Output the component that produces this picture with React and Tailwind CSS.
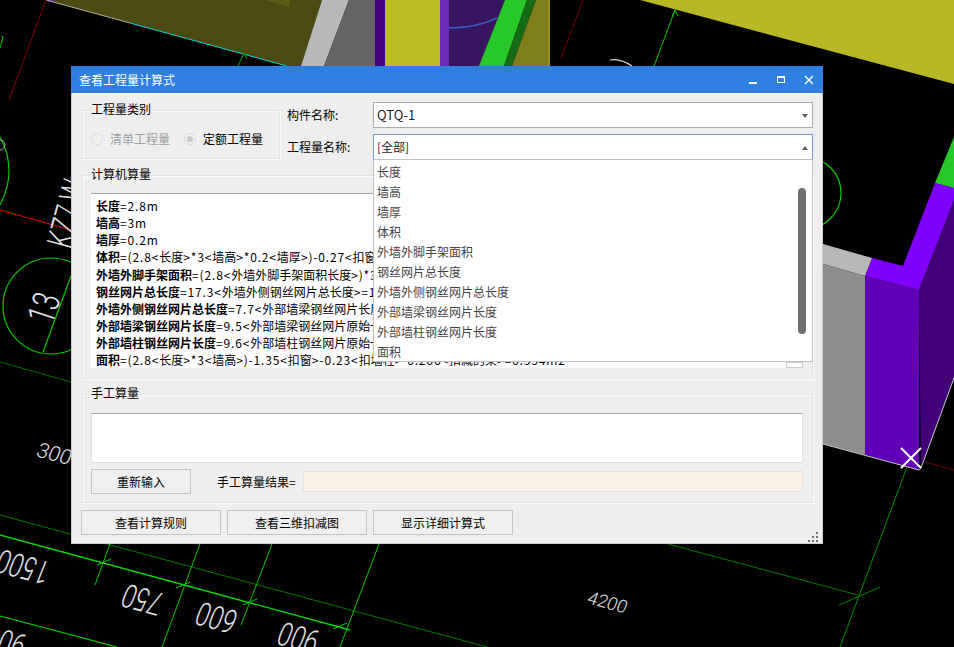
import React from "react";

const FONT = "font-['Noto_Sans_CJK_SC','Microsoft_YaHei','Liberation_Sans',sans-serif]";

const listItems = [
  "长度",
  "墙高",
  "墙厚",
  "体积",
  "外墙外脚手架面积",
  "钢丝网片总长度",
  "外墙外侧钢丝网片总长度",
  "外部墙梁钢丝网片长度",
  "外部墙柱钢丝网片长度",
  "面积",
];

const calcRows = [
  ["长度", "=2.8m"],
  ["墙高", "=3m"],
  ["墙厚", "=0.2m"],
  ["体积", "=(2.8<长度>*3<墙高>*0.2<墙厚>)-0.27<扣窗>-0.05<扣墙柱>=0.8m3"],
  ["外墙外脚手架面积", "=(2.8<外墙外脚手架面积长度>)*3<外墙外脚手架面积高度>=8.4m2"],
  ["钢丝网片总长度", "=17.3<外墙外侧钢丝网片总长度>=17.3m"],
  ["外墙外侧钢丝网片总长度", "=7.7<外部墙梁钢丝网片长度>+9.6<外部墙柱钢丝网片长度>=17.3m"],
  ["外部墙梁钢丝网片长度", "=9.5<外部墙梁钢丝网片原始长度>-1.8<扣窗>=7.7m"],
  ["外部墙柱钢丝网片长度", "=9.6<外部墙柱钢丝网片原始长度>=9.6m"],
  ["面积", "=(2.8<长度>*3<墙高>)-1.35<扣窗>-0.23<扣墙柱>-0.266<扣减的梁>=6.554m2"],
];

// cad dimension labels, skewed the way the 3d view projects them
const flipped = (e, f) => `matrix(-0.966 -0.26 0.51 -1.29 ${e} ${f})`;
const CAD_TEXT = { fill: "#e4e4e4", fontFamily: "Roboto,sans-serif", fontWeight: 300 };

const Backdrop = () => (
  <svg className="absolute inset-0" width="954" height="647" viewBox="0 0 954 647">
    <rect width="954" height="647" fill="#000000" />
    {/* top model */}
    <polygon points="46,0 322,0 301,66 287,66" fill="#4b4a10" />
    <polygon points="265,0 290,0 290,7" fill="#5c5b12" />
    <polygon points="46,0 56,0 50,2" fill="#6a2bb8" />
    <polygon points="322,0 349,0 324,66 301,66" fill="#b8b8b8" />
    <polygon points="349,0 375,0 375,66 324,66" fill="#646464" />
    <rect x="375" width="10" height="66" fill="#430080" />
    <rect x="385" width="55" height="66" fill="#bdbb25" />
    <rect x="440" width="9" height="66" fill="#6a2bb8" />
    <polygon points="449,0 505,0 480,66 449,66" fill="#37155f" />
    <polygon points="505,0 527,0 504,66 479,66" fill="#28c828" />
    <polygon points="527,0 536,0 512,66 504,66" fill="#156b15" />
    <polygon points="536,0 550,0 550,66 512,66" fill="#7f7d1c" />
    <line x1="549" y1="0" x2="549" y2="66" stroke="#a5a322" />
    <path d="M449 28 Q476 28 497 18" fill="none" stroke="#3a60c0" strokeWidth="1.5" />
    <polygon points="640,0 954,0 954,84" fill="#b9b725" />
    <line x1="46" y1="0" x2="130" y2="23" stroke="#b0b0a0" />
    <line x1="130" y1="23" x2="287" y2="66" stroke="#00d8d8" />
    <line x1="46" y1="0" x2="9" y2="100" stroke="#8a0000" />
    <line x1="583" y1="0" x2="561" y2="58" stroke="#7a0000" />
    <path d="M675 10 L654 66 M675 10 L672 17 M675 10 L678 16" fill="none" stroke="#00c800" />
    <path d="M244 53 L238 66 M244 53 L241 59 M244 53 L247 59" fill="none" stroke="#00a000" />
    <path d="M610 60 Q620 58 632 66" fill="none" stroke="#e0e0e0" strokeWidth="1.2" />
    <path d="M0 48 L3 37 L1 36" fill="none" stroke="#00c800" />

    {/* right model */}
    <polygon points="954,137 935,183 954,188" fill="#28c828" />
    <polygon points="935,183 954,188 954,200 919,290 865,276 872,258 903,266" fill="#8000ff" />
    <polygon points="865,276 919,290 919,470 865,455" fill="#6200b8" />
    <polygon points="919,290 954,200 954,378 921,468" fill="#420078" />
    <polygon points="823,244 872,258 865,276 823,264" fill="#b8b8b8" />
    <polygon points="823,264 865,276 865,455 823,444" fill="#8e8e8e" />
    <polyline points="823,444 919,470 921,468 954,378" fill="none" stroke="#c8c8c8" />
    <circle cx="805" cy="193" r="36" fill="none" stroke="#00c800" strokeWidth="1.2" />
    <line x1="925" y1="462" x2="954" y2="470" stroke="#700000" />
    <line x1="907" y1="467" x2="840" y2="647" stroke="#009000" />
    <line x1="839" y1="605" x2="880" y2="587" stroke="#008800" />
    <path d="M901 448 L921 468 M921 448 L901 468" stroke="#ffffff" strokeWidth="2" />

    {/* left side */}
    <circle cx="51" cy="306" r="48" fill="none" stroke="#00c800" strokeWidth="1.2" />
    <line x1="43" y1="352" x2="71" y2="276" stroke="#00c800" strokeWidth="1.2" />
    <line x1="0" y1="210" x2="71" y2="230" stroke="#d80000" strokeWidth="1.2" />
    <path d="M0 137 Q18 170 0 205" fill="none" stroke="#00c800" strokeWidth="1.2" />
    <circle cx="0" cy="145" r="5" fill="none" stroke="#a8a8a8" />
    <line x1="0" y1="362" x2="71" y2="382" stroke="#007000" />
    <text transform="translate(52 326) rotate(-72) scale(0.7 1)" fontSize="38" {...CAD_TEXT}>13</text>
    <text transform="translate(71 250) rotate(-75) scale(0.65 1)" fontSize="36" {...CAD_TEXT}>KZ7 Wx</text>
    <text transform="matrix(0.966 0.26 -0.37 0.93 35 456)" fontSize="21" {...CAD_TEXT}>3000</text>

    {/* dimension lines under the dialog */}
    <line x1="0" y1="535" x2="350" y2="630" stroke="#00d800" strokeWidth="1.3" />
    <line x1="0" y1="616" x2="117" y2="647" stroke="#00d800" strokeWidth="1.2" />
    <line x1="0" y1="515" x2="487" y2="647" stroke="#007800" />
    <line x1="668" y1="544" x2="858" y2="595" stroke="#007800" />
    <line x1="110" y1="544" x2="95" y2="585" stroke="#00c800" />
    <line x1="200" y1="544" x2="162" y2="647" stroke="#00c800" />
    <line x1="272" y1="544" x2="241" y2="625" stroke="#00c800" />
    <line x1="379" y1="544" x2="340" y2="647" stroke="#00c800" />
    <path d="M97 565 L111 559 M176 588 L190 582 M243 605 L257 599 M333 629 L347 623" stroke="#00d000" />
    <text transform={flipped(53, 563)} fontSize="24" {...CAD_TEXT}>1500</text>
    <text transform={flipped(166, 594)} fontSize="24" {...CAD_TEXT}>750</text>
    <text transform={flipped(240, 612)} fontSize="24" {...CAD_TEXT}>600</text>
    <text transform={flipped(322, 632)} fontSize="24" {...CAD_TEXT}>900</text>
    <text transform={flipped(29, 636)} fontSize="24" {...CAD_TEXT}>900</text>
    <text transform="matrix(0.966 0.26 -0.37 0.93 586 603)" fontSize="18" {...CAD_TEXT}>4200</text>
  </svg>
);

// latin parts of the formula run wider than the chinese font's own digits
const Formula = ({ text }) =>
  text.split(/([\u4e00-\u9fa5]+)/).map((part, i) =>
    i % 2 ? <span key={i}>{part}</span> : <span key={i} className="tracking-[0.85px]">{part}</span>
  );

const GroupBox = ({ title, className, children }) => (
  <div className={`relative border border-[#e2e2e2] shadow-[inset_1px_1px_0_#fafafa,1px_1px_0_#fafafa] ${className}`}>
    <span className="absolute left-[7px] top-[-10px] bg-[#eeeeee] px-px text-[12px] leading-[16px] text-black">{title}</span>
    {children}
  </div>
);

const Arrow = ({ up }) => (
  <svg className="absolute right-[4px] top-[11px]" width="6" height="4" viewBox="0 0 6 4">
    <polygon points={up ? "3,0 6,4 0,4" : "0,0 6,0 3,4"} fill="#606060" />
  </svg>
);

const Radio = ({ checked }) => (
  <span className="flex h-[12px] w-[12px] items-center justify-center rounded-full border border-[#dcdcdc] bg-[#efefef]">
    {checked && <span className="h-[6px] w-[6px] rounded-full bg-[#c8c8c8]" />}
  </span>
);

const Btn = ({ children, className }) => (
  <button type="button" className={`h-[25px] border border-[#c4c4c4] bg-[#efefef] text-[12px] text-black ${className}`}>
    {children}
  </button>
);

export default function App() {
  return (
    <div className={`relative h-[647px] w-[954px] overflow-hidden bg-black ${FONT}`}>
      <Backdrop />

      <div className="absolute left-[71px] top-[66px] flex h-[478px] w-[752px] flex-col border-b border-x border-[#c8ccd0] bg-[#eeeeee]">
        {/* title bar */}
        <div className="-mx-px flex h-[27px] shrink-0 items-center justify-between bg-[#2e7fe0] pl-[8px] pr-[10px] text-[12px] text-white">
          <span>查看工程量计算式</span>
          <svg width="64" height="10" viewBox="0 0 64 10">
            <rect x="0" y="7" width="8" height="2" fill="#ffffff" />
            <rect x="28.5" y="1.5" width="7" height="6" fill="none" stroke="#ffffff" />
            <rect x="28" y="1" width="8" height="2" fill="#ffffff" />
            <path d="M56 1 L64 9 M64 1 L56 9" stroke="#ffffff" strokeWidth="1.5" />
          </svg>
        </div>

        <div className="relative flex flex-col pl-[9px] pr-[9px] text-[12px]">
          {/* top row */}
          <div className="flex pt-[9px]">
            <GroupBox title="工程量类别" className="ml-px mt-[8px] flex h-[49px] w-[198px] items-center pl-[8px] pt-[9px]">
              <Radio />
              <span className="ml-[7px] text-[#a0a0a0]">清单工程量</span>
              <span className="ml-[14px]"><Radio checked /></span>
              <span className="ml-[7px] text-black">定额工程量</span>
            </GroupBox>

            <div className="ml-[7px] flex flex-1 flex-col gap-[6px]">
              <div className="flex items-center">
                <span className="w-[86px] text-black">构件名称:</span>
                <div className="relative flex h-[26px] flex-1 items-center border border-[#ababab] bg-white pl-[3px] text-[13px] text-[#222222]">
                  QTQ-1
                  <Arrow />
                </div>
              </div>
              <div className="flex items-center">
                <span className="w-[86px] text-black">工程量名称:</span>
                <div className="relative flex h-[26px] flex-1 items-center border border-[#6f9be0] border-b-[#c0c0c8] bg-white pl-[3px] text-[12px] text-[#222222]">
                  [全部]
                  <Arrow up />
                </div>
              </div>
            </div>
          </div>

          {/* computer quantities */}
          <GroupBox title="计算机算量" className="ml-px mt-[15px] h-[204px] pl-[8px] pr-[9px] pt-[17px]">
            <div className="relative h-[175px] overflow-hidden border-t border-[#a8a8a8] bg-white pl-[5px] pt-[3px] text-[12px] leading-[17.15px] text-black">
              {calcRows.map(([name, formula]) => (
                <div key={name} className="whitespace-nowrap">
                  <span className="font-bold">{name}</span>
                  <Formula text={formula} />
                </div>
              ))}
              <div className="absolute bottom-0 right-0 h-[6px] w-[17px] border border-[#cccccc] bg-white" />
            </div>
          </GroupBox>

          {/* manual quantities */}
          <GroupBox title="手工算量" className="ml-px mt-[15px] h-[109px] pl-[8px] pr-[9px] pt-[18px]">
            <div className="h-[50px] border border-[#e0e0e0] border-t-[#a8a8b0] bg-white" />
            <div className="mt-[6px] flex items-center">
              <Btn className="w-[100px]">重新输入</Btn>
              <span className="ml-[26px] w-[86px] text-black">手工算量结果=</span>
              <div className="h-[21px] flex-1 border border-[#e4e0da] bg-[#f9f0e6]" />
            </div>
          </GroupBox>

          {/* bottom buttons */}
          <div className="mt-[7px] flex gap-[6px]">
            <Btn className="w-[140px]">查看计算规则</Btn>
            <Btn className="w-[140px]">查看三维扣减图</Btn>
            <Btn className="w-[140px]">显示详细计算式</Btn>
          </div>

          {/* open drop-down list */}
          <div className="absolute left-[301px] top-[67px] h-[202px] w-[440px] border-x border-b border-[#c0c0c8] bg-white pt-[2px] text-[12px] text-[#444444]">
            {listItems.map((item) => (
              <div key={item} className="flex h-[20px] items-center pl-[3px]">{item}</div>
            ))}
            <div className="absolute right-[6px] top-[28px] h-[146px] w-[8px] rounded-[4px] bg-[#707070]" />
          </div>
        </div>

        {/* resize grip */}
        <svg className="absolute bottom-[1px] right-[2px]" width="12" height="10" viewBox="0 0 12 10">
          <rect x="8" y="0" width="2" height="2" fill="#707070" />
          <rect x="4" y="4" width="2" height="2" fill="#707070" />
          <rect x="8" y="4" width="2" height="2" fill="#707070" />
          <rect x="0" y="8" width="2" height="2" fill="#707070" />
          <rect x="4" y="8" width="2" height="2" fill="#707070" />
          <rect x="8" y="8" width="2" height="2" fill="#707070" />
        </svg>
      </div>
    </div>
  );
}
